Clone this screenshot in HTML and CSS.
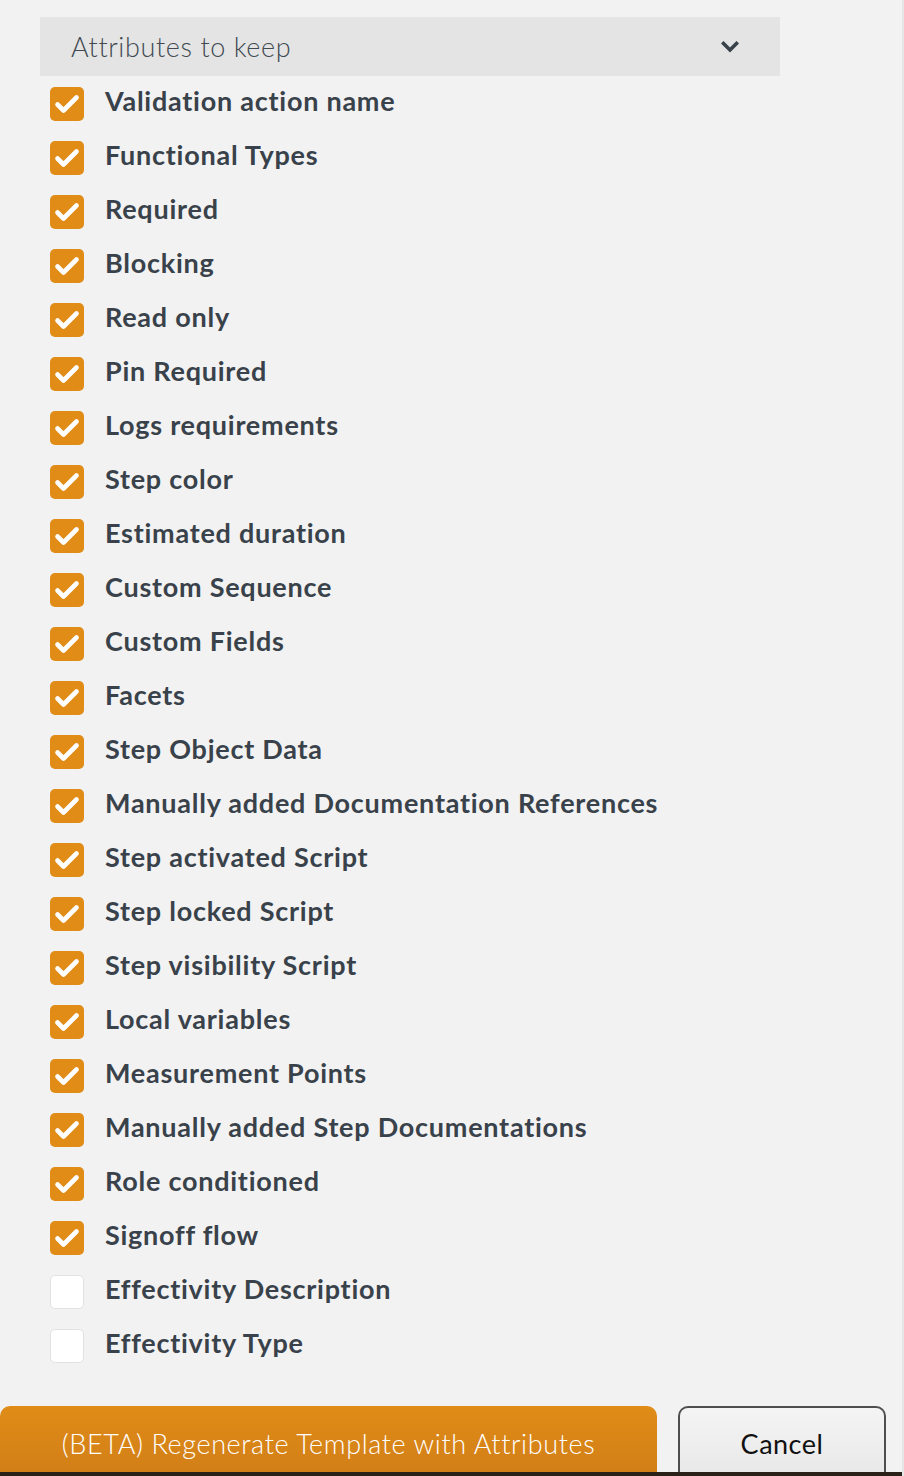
FILE: index.html
```html
<!DOCTYPE html>
<html>
<head>
<meta charset="utf-8">
<link rel="stylesheet" href="styles.css">
</head>
<body>
<div class="page">
  <div class="content">
    <div class="dropdown">
      <span class="dropdown-label">Attributes to keep</span>
      <svg class="chevron" width="18" height="12" viewBox="0 0 18 12"><path d="M2.5 2.5 L9 9 L15.5 2.5" fill="none" stroke="#39424a" stroke-width="3.6" stroke-linecap="square"/></svg>
    </div>
    <ul class="list">
      <li class="item"><span class="box checked"><svg viewBox="0 0 34 34" width="34" height="34"><path d="M7.5 17.5 L13.5 23.5 L26.5 10.5" fill="none" stroke="#fff" stroke-width="4.6" stroke-linecap="round" stroke-linejoin="round"/></svg></span><span class="label">Validation action name</span></li>
      <li class="item"><span class="box checked"><svg viewBox="0 0 34 34" width="34" height="34"><path d="M7.5 17.5 L13.5 23.5 L26.5 10.5" fill="none" stroke="#fff" stroke-width="4.6" stroke-linecap="round" stroke-linejoin="round"/></svg></span><span class="label">Functional Types</span></li>
      <li class="item"><span class="box checked"><svg viewBox="0 0 34 34" width="34" height="34"><path d="M7.5 17.5 L13.5 23.5 L26.5 10.5" fill="none" stroke="#fff" stroke-width="4.6" stroke-linecap="round" stroke-linejoin="round"/></svg></span><span class="label">Required</span></li>
      <li class="item"><span class="box checked"><svg viewBox="0 0 34 34" width="34" height="34"><path d="M7.5 17.5 L13.5 23.5 L26.5 10.5" fill="none" stroke="#fff" stroke-width="4.6" stroke-linecap="round" stroke-linejoin="round"/></svg></span><span class="label">Blocking</span></li>
      <li class="item"><span class="box checked"><svg viewBox="0 0 34 34" width="34" height="34"><path d="M7.5 17.5 L13.5 23.5 L26.5 10.5" fill="none" stroke="#fff" stroke-width="4.6" stroke-linecap="round" stroke-linejoin="round"/></svg></span><span class="label">Read only</span></li>
      <li class="item"><span class="box checked"><svg viewBox="0 0 34 34" width="34" height="34"><path d="M7.5 17.5 L13.5 23.5 L26.5 10.5" fill="none" stroke="#fff" stroke-width="4.6" stroke-linecap="round" stroke-linejoin="round"/></svg></span><span class="label">Pin Required</span></li>
      <li class="item"><span class="box checked"><svg viewBox="0 0 34 34" width="34" height="34"><path d="M7.5 17.5 L13.5 23.5 L26.5 10.5" fill="none" stroke="#fff" stroke-width="4.6" stroke-linecap="round" stroke-linejoin="round"/></svg></span><span class="label">Logs requirements</span></li>
      <li class="item"><span class="box checked"><svg viewBox="0 0 34 34" width="34" height="34"><path d="M7.5 17.5 L13.5 23.5 L26.5 10.5" fill="none" stroke="#fff" stroke-width="4.6" stroke-linecap="round" stroke-linejoin="round"/></svg></span><span class="label">Step color</span></li>
      <li class="item"><span class="box checked"><svg viewBox="0 0 34 34" width="34" height="34"><path d="M7.5 17.5 L13.5 23.5 L26.5 10.5" fill="none" stroke="#fff" stroke-width="4.6" stroke-linecap="round" stroke-linejoin="round"/></svg></span><span class="label">Estimated duration</span></li>
      <li class="item"><span class="box checked"><svg viewBox="0 0 34 34" width="34" height="34"><path d="M7.5 17.5 L13.5 23.5 L26.5 10.5" fill="none" stroke="#fff" stroke-width="4.6" stroke-linecap="round" stroke-linejoin="round"/></svg></span><span class="label">Custom Sequence</span></li>
      <li class="item"><span class="box checked"><svg viewBox="0 0 34 34" width="34" height="34"><path d="M7.5 17.5 L13.5 23.5 L26.5 10.5" fill="none" stroke="#fff" stroke-width="4.6" stroke-linecap="round" stroke-linejoin="round"/></svg></span><span class="label">Custom Fields</span></li>
      <li class="item"><span class="box checked"><svg viewBox="0 0 34 34" width="34" height="34"><path d="M7.5 17.5 L13.5 23.5 L26.5 10.5" fill="none" stroke="#fff" stroke-width="4.6" stroke-linecap="round" stroke-linejoin="round"/></svg></span><span class="label">Facets</span></li>
      <li class="item"><span class="box checked"><svg viewBox="0 0 34 34" width="34" height="34"><path d="M7.5 17.5 L13.5 23.5 L26.5 10.5" fill="none" stroke="#fff" stroke-width="4.6" stroke-linecap="round" stroke-linejoin="round"/></svg></span><span class="label">Step Object Data</span></li>
      <li class="item"><span class="box checked"><svg viewBox="0 0 34 34" width="34" height="34"><path d="M7.5 17.5 L13.5 23.5 L26.5 10.5" fill="none" stroke="#fff" stroke-width="4.6" stroke-linecap="round" stroke-linejoin="round"/></svg></span><span class="label">Manually added Documentation References</span></li>
      <li class="item"><span class="box checked"><svg viewBox="0 0 34 34" width="34" height="34"><path d="M7.5 17.5 L13.5 23.5 L26.5 10.5" fill="none" stroke="#fff" stroke-width="4.6" stroke-linecap="round" stroke-linejoin="round"/></svg></span><span class="label">Step activated Script</span></li>
      <li class="item"><span class="box checked"><svg viewBox="0 0 34 34" width="34" height="34"><path d="M7.5 17.5 L13.5 23.5 L26.5 10.5" fill="none" stroke="#fff" stroke-width="4.6" stroke-linecap="round" stroke-linejoin="round"/></svg></span><span class="label">Step locked Script</span></li>
      <li class="item"><span class="box checked"><svg viewBox="0 0 34 34" width="34" height="34"><path d="M7.5 17.5 L13.5 23.5 L26.5 10.5" fill="none" stroke="#fff" stroke-width="4.6" stroke-linecap="round" stroke-linejoin="round"/></svg></span><span class="label">Step visibility Script</span></li>
      <li class="item"><span class="box checked"><svg viewBox="0 0 34 34" width="34" height="34"><path d="M7.5 17.5 L13.5 23.5 L26.5 10.5" fill="none" stroke="#fff" stroke-width="4.6" stroke-linecap="round" stroke-linejoin="round"/></svg></span><span class="label">Local variables</span></li>
      <li class="item"><span class="box checked"><svg viewBox="0 0 34 34" width="34" height="34"><path d="M7.5 17.5 L13.5 23.5 L26.5 10.5" fill="none" stroke="#fff" stroke-width="4.6" stroke-linecap="round" stroke-linejoin="round"/></svg></span><span class="label">Measurement Points</span></li>
      <li class="item"><span class="box checked"><svg viewBox="0 0 34 34" width="34" height="34"><path d="M7.5 17.5 L13.5 23.5 L26.5 10.5" fill="none" stroke="#fff" stroke-width="4.6" stroke-linecap="round" stroke-linejoin="round"/></svg></span><span class="label">Manually added Step Documentations</span></li>
      <li class="item"><span class="box checked"><svg viewBox="0 0 34 34" width="34" height="34"><path d="M7.5 17.5 L13.5 23.5 L26.5 10.5" fill="none" stroke="#fff" stroke-width="4.6" stroke-linecap="round" stroke-linejoin="round"/></svg></span><span class="label">Role conditioned</span></li>
      <li class="item"><span class="box checked"><svg viewBox="0 0 34 34" width="34" height="34"><path d="M7.5 17.5 L13.5 23.5 L26.5 10.5" fill="none" stroke="#fff" stroke-width="4.6" stroke-linecap="round" stroke-linejoin="round"/></svg></span><span class="label">Signoff flow</span></li>
      <li class="item"><span class="box"></span><span class="label">Effectivity Description</span></li>
      <li class="item"><span class="box"></span><span class="label">Effectivity Type</span></li>
    </ul>
  </div>
  <div class="actions">
    <button class="btn btn-primary">(BETA) Regenerate Template with Attributes</button>
    <button class="btn btn-cancel">Cancel</button>
  </div>
  <div class="bottom-strip"></div>
</div>
</body>
</html>
```

FILE: styles.css
```css
html, body {
  margin: 0;
  padding: 0;
  background: #f2f2f2;
}

.page {
  width: 904px;
  height: 1476px;
  box-sizing: border-box;
  border-right: 2px solid #e6e6e6;
  display: flex;
  flex-direction: column;
  overflow: hidden;
  font-family: "Lato", "Open Sans", sans-serif;
  color: #39424a;
}

.content {
  padding: 17px 0 0 40px;
  flex: 1;
}

.dropdown {
  width: 740px;
  height: 59px;
  background: #e4e4e4;
  display: flex;
  align-items: center;
  justify-content: space-between;
  box-sizing: border-box;
  padding: 0 41px 0 31px;
}

.dropdown-label {
  font-size: 27px;
  font-weight: 300;
  letter-spacing: 0.6px;
  color: #414a52;
  padding-bottom: 1px;
}

.chevron {
  display: block;
}

.list {
  list-style: none;
  margin: 11px 0 0 0;
  padding: 0 0 0 10px;
  display: flex;
  flex-direction: column;
  gap: 20px;
}

.item {
  display: flex;
  align-items: center;
  height: 34px;
  gap: 21px;
}

.box {
  width: 34px;
  height: 34px;
  box-sizing: border-box;
  border-radius: 5px;
  background: #fff;
  border: 1px solid #e2e2e2;
  flex: none;
  display: flex;
}

.box.checked {
  background: #e08c17;
  border: none;
}

.label {
  font-size: 27px;
  font-weight: 700;
  color: #39424a;
  letter-spacing: 0.75px;
  padding-bottom: 8px;
}

.actions {
  display: flex;
  align-items: flex-end;
  gap: 21px;
  height: 66px;
  flex: none;
}

.btn {
  height: 66px;
  font-family: "Lato", "Open Sans", sans-serif;
  font-size: 27px;
  font-weight: 300;
  letter-spacing: 0.6px;
  border-radius: 10px 10px 0 0;
  padding: 8px 0 0 0;
  cursor: pointer;
}

.btn-primary {
  width: 657px;
  background: linear-gradient(#e08c17, #d27f18);
  color: #fff;
  border: none;
}

.btn-cancel {
  width: 208px;
  background: linear-gradient(#f4f4f4, #e9e9e9);
  color: #111;
  border: 2px solid #4e4e4e;
  border-bottom: none;
  font-weight: 400;
  letter-spacing: 0.5px;
  padding-top: 6px;
}

.bottom-strip {
  height: 4px;
  flex: none;
  background: #2a2218;
}
```
